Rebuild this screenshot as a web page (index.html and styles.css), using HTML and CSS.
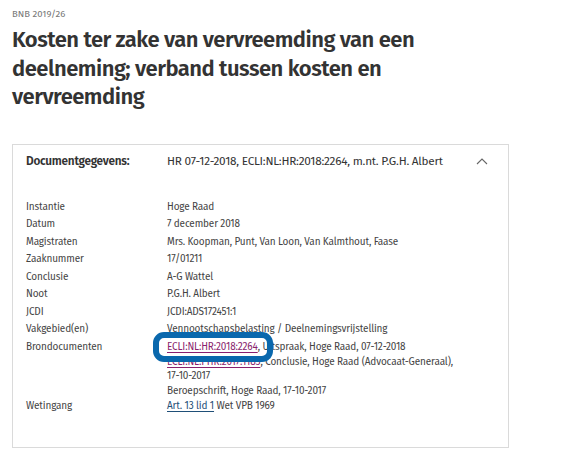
FILE: index.html
```html
<!DOCTYPE html>
<html lang="nl">
<head>
    <meta charset="UTF-8">
    <meta name="viewport" content="width=device-width, initial-scale=1.0">
    <title>BNB 2019/26</title>
    <link rel="stylesheet" href="styles.css">
</head>
<body>
    <div class="page">
        <div class="doc-number">BNB 2019/26</div>
        <h1>Kosten ter zake van vervreemding van een deelneming; verband tussen kosten en vervreemding</h1>

        <div class="card">
            <div class="card-head">
                <div class="card-title">Documentgegevens:</div>
                <div class="card-summary">HR 07-12-2018, ECLI:NL:HR:2018:2264, m.nt. P.G.H. Albert</div>
                <svg class="chevron" width="12" height="8" viewBox="0 0 12 8">
                    <polyline points="1,7 6,2 11,7" fill="none" stroke="#666" stroke-width="1.1"/>
                </svg>
            </div>

            <div class="meta">
                <div class="label">Instantie</div>
                <div class="value">Hoge Raad</div>

                <div class="label">Datum</div>
                <div class="value">7 december 2018</div>

                <div class="label">Magistraten</div>
                <div class="value">Mrs. Koopman, Punt, Van Loon, Van Kalmthout, Faase</div>

                <div class="label">Zaaknummer</div>
                <div class="value">17/01211</div>

                <div class="label">Conclusie</div>
                <div class="value">A-G Wattel</div>

                <div class="label">Noot</div>
                <div class="value">P.G.H. Albert</div>

                <div class="label">JCDI</div>
                <div class="value">JCDI:ADS172451:1</div>

                <div class="label">Vakgebied(en)</div>
                <div class="value">Vennootschapsbelasting / Deelnemingsvrijstelling</div>

                <div class="label">Brondocumenten</div>
                <div class="value multi">
                    <div><span class="marked"><a class="visited" href="#">ECLI:NL:HR:2018:2264</a><span class="ring"></span></span>, Uitspraak, Hoge Raad, 07-12-2018</div>
                    <div><a class="visited" href="#">ECLI:NL:PHR:2017:1185</a>, Conclusie, Hoge Raad (Advocaat-Generaal), 17-10-2017</div>
                    <div>Beroepschrift, Hoge Raad, 17-10-2017</div>
                </div>

                <div class="label">Wetingang</div>
                <div class="value"><a class="law" href="#">Art. 13 lid 1</a> Wet VPB 1969</div>
            </div>
        </div>
    </div>
</body>
</html>
```

FILE: styles.css
```css
body {
    margin: 0;
    background-color: #fff;
    color: #333;
    font-family: 'Fira Sans', 'Open Sans', sans-serif;
}

.page {
    padding: 7px 12px 0 12px;
}

.doc-number {
    font-size: 9.5px;
    color: #777;
    line-height: 14px;
}

h1 {
    font-size: 22px;
    font-weight: 600;
    line-height: 28.5px;
    letter-spacing: -0.5px;
    color: #333;
    margin: 5px 0 0 0;
    max-width: 440px;
}

.card {
    margin-top: 32px;
    width: 497px;
    border: 1px solid #dadada;
    padding: 7px 13px 32px 13px;
    box-sizing: border-box;
}

.card-head {
    display: flex;
    align-items: center;
    font-size: 11.8px;
    line-height: 18px;
    letter-spacing: -0.25px;
}

.card-title {
    width: 141px;
    font-weight: 600;
}

.card-summary {
    flex: 1;
}

.chevron {
    margin-right: 7px;
}

.meta {
    display: grid;
    grid-template-columns: 141px 290px;
    margin-top: 29px;
    font-size: 10px;
    line-height: 17.5px;
    letter-spacing: -0.15px;
    color: #444;
}

.value.multi {
    line-height: 14.7px;
    margin-top: 1.5px;
    margin-bottom: -1px;
}

a {
    text-decoration: underline;
    text-underline-offset: 2px;
}

a.visited {
    color: #8a1f6e;
}

a.law {
    color: #1f4f78;
}

.marked {
    position: relative;
}

.ring {
    position: absolute;
    left: -14px;
    right: -15px;
    top: -9px;
    bottom: -9px;
    border: 6px solid #0a68ad;
    border-radius: 11px;
}
```
